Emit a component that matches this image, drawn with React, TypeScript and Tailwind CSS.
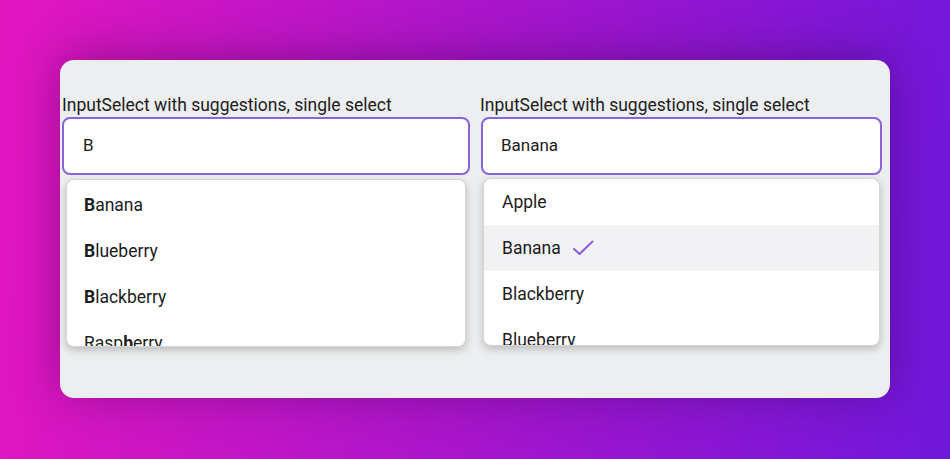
import React from "react";

function Highlight({ text, q }: { text: string; q: string }) {
  const i = text.toLowerCase().indexOf(q.toLowerCase());
  if (i < 0) return <>{text}</>;
  return (
    <>
      {text.slice(0, i)}
      <b className="font-bold">{text.slice(i, i + q.length)}</b>
      {text.slice(i + q.length)}
    </>
  );
}

export default function App() {
  const left = ["Banana", "Blueberry", "Blackberry", "Raspberry"];
  const right = ["Apple", "Banana", "Blackberry", "Blueberry"];
  return (
    <div
      className="w-[950px] h-[459px] p-[60px] bg-[linear-gradient(95deg,#e316c0_0%,#a915cb_50%,#6f17db_100%)] text-[#1c1c1c]"
      style={{ fontFamily: "Roboto, 'Noto Sans', sans-serif" }}
    >
      <div className="w-[830px] h-[338px] rounded-[14px] bg-[#eceeef] shadow-[0_-4px_45px_rgba(40,0,60,0.38)] pt-[35px] pl-[2px] flex gap-[11px]">
        <div className="w-[408px] flex flex-col">
          <div className="text-[17.5px] leading-[20px] mb-[2px] whitespace-nowrap">InputSelect with suggestions, single select</div>
          <div className="h-[58px] rounded-[8px] border-2 border-[#8a63d8] bg-white flex items-center pl-[19px] text-[17px]">
            B
          </div>
          <div className="mx-[4px] mt-[4px] h-[168px] overflow-hidden rounded-[8px] bg-white border border-[#d6d6d6] shadow-[0_3px_8px_rgba(0,0,0,0.22)] pt-[2px]">
            {left.map((t) => (
              <div key={t} className="h-[46px] flex items-center pl-[17px] text-[17.5px]">
                <span>
                  <Highlight text={t} q="b" />
                </span>
              </div>
            ))}
          </div>
        </div>
        <div className="w-[401px] flex flex-col">
          <div className="text-[17.5px] leading-[20px] mb-[2px] -ml-[1px] whitespace-nowrap">InputSelect with suggestions, single select</div>
          <div className="h-[58px] rounded-[8px] border-2 border-[#8a63d8] bg-white flex items-center pl-[18px] text-[17px]">
            Banana
          </div>
          <div className="ml-[2px] mr-[2px] mt-[3px] h-[168px] overflow-hidden rounded-[8px] bg-white border border-[#d6d6d6] shadow-[0_3px_8px_rgba(0,0,0,0.22)]">
            {right.map((t) => (
              <div
                key={t}
                className={
                  "h-[46px] flex items-center pl-[18px] text-[17.5px] " +
                  (t === "Banana" ? "bg-[#f2f2f4]" : "")
                }
              >
                <span>{t}</span>
                {t === "Banana" && (
                  <svg width="22" height="16" viewBox="0 0 22 16" className="ml-[11px]" fill="none">
                    <path d="M2 9 L7.5 14 L20.5 1.5" stroke="#8a5cd6" strokeWidth="2" strokeLinecap="round" strokeLinejoin="round" />
                  </svg>
                )}
              </div>
            ))}
          </div>
        </div>
      </div>
    </div>
  );
}
